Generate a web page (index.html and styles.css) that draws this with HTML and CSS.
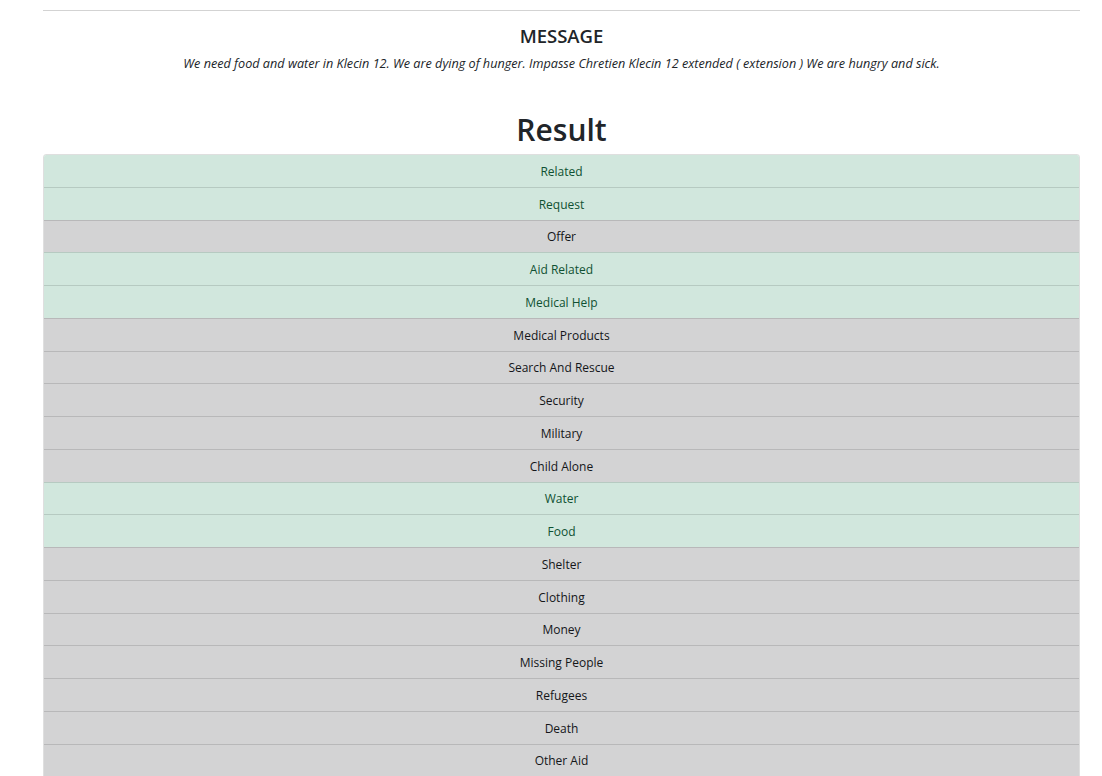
FILE: index.html
```html
<!DOCTYPE html>
<html lang="en">
<head>
<meta charset="utf-8">
<title>Result</title>
<link rel="stylesheet" href="styles.css">
</head>
<body>
<div class="container">
  <hr class="rule">
  <section class="message">
    <h2 class="message-title">MESSAGE</h2>
    <p class="message-text">We need food and water in Klecin 12. We are dying of hunger. Impasse Chretien Klecin 12 extended ( extension ) We are hungry and sick.</p>
  </section>
  <h1 class="result-title">Result</h1>
  <ul class="list">
    <li class="item item-success">Related</li>
    <li class="item item-success">Request</li>
    <li class="item item-dark">Offer</li>
    <li class="item item-success">Aid Related</li>
    <li class="item item-success">Medical Help</li>
    <li class="item item-dark">Medical Products</li>
    <li class="item item-dark">Search And Rescue</li>
    <li class="item item-dark">Security</li>
    <li class="item item-dark">Military</li>
    <li class="item item-dark">Child Alone</li>
    <li class="item item-success">Water</li>
    <li class="item item-success">Food</li>
    <li class="item item-dark">Shelter</li>
    <li class="item item-dark">Clothing</li>
    <li class="item item-dark">Money</li>
    <li class="item item-dark">Missing People</li>
    <li class="item item-dark">Refugees</li>
    <li class="item item-dark">Death</li>
    <li class="item item-dark">Other Aid</li>
    <li class="item item-dark">Infrastructure Related</li>
  </ul>
</div>
</body>
</html>
```
FILE: styles.css
```css
html, body {
  margin: 0;
  padding: 0;
  background: #fff;
}
body {
  font-family: "Open Sans", "Noto Sans", sans-serif;
  color: #212529;
}
.container {
  margin: 0 22px 0 43px;
  padding-top: 10px;
}
.rule {
  margin: 0;
  border: 0;
  border-top: 1px solid #d3d3d3;
}
.message {
  text-align: center;
  padding-top: 13px;
}
.message-title {
  margin: 0;
  font-size: 18.5px;
  line-height: 24px;
  font-weight: 600;
  color: #212529;
}
.message-text {
  margin: 6px 0 0;
  font-size: 12.65px;
  line-height: 18px;
  font-style: italic;
  color: #212529;
}
.result-title {
  margin: 38px 0 4px;
  text-align: center;
  font-size: 30px;
  line-height: 40px;
  font-weight: 600;
  color: #212529;
}
.list {
  list-style: none;
  margin: 0;
  padding: 0;
  border-radius: 3px;
  overflow: hidden;
  border: 1px solid rgba(0,0,0,0.125);
}
.item {
  text-align: center;
  font-size: 12px;
  line-height: 20px;
  padding: 6.89px 0 4.89px;
  border-top: 1px solid rgba(0,0,0,0.125);
}
.item:first-child {
  border-top: 0;
}
.item-success {
  background: #d1e7dd;
  color: #0f5132;
}
.item-dark {
  background: #d3d3d4;
  color: #141619;
}
```
